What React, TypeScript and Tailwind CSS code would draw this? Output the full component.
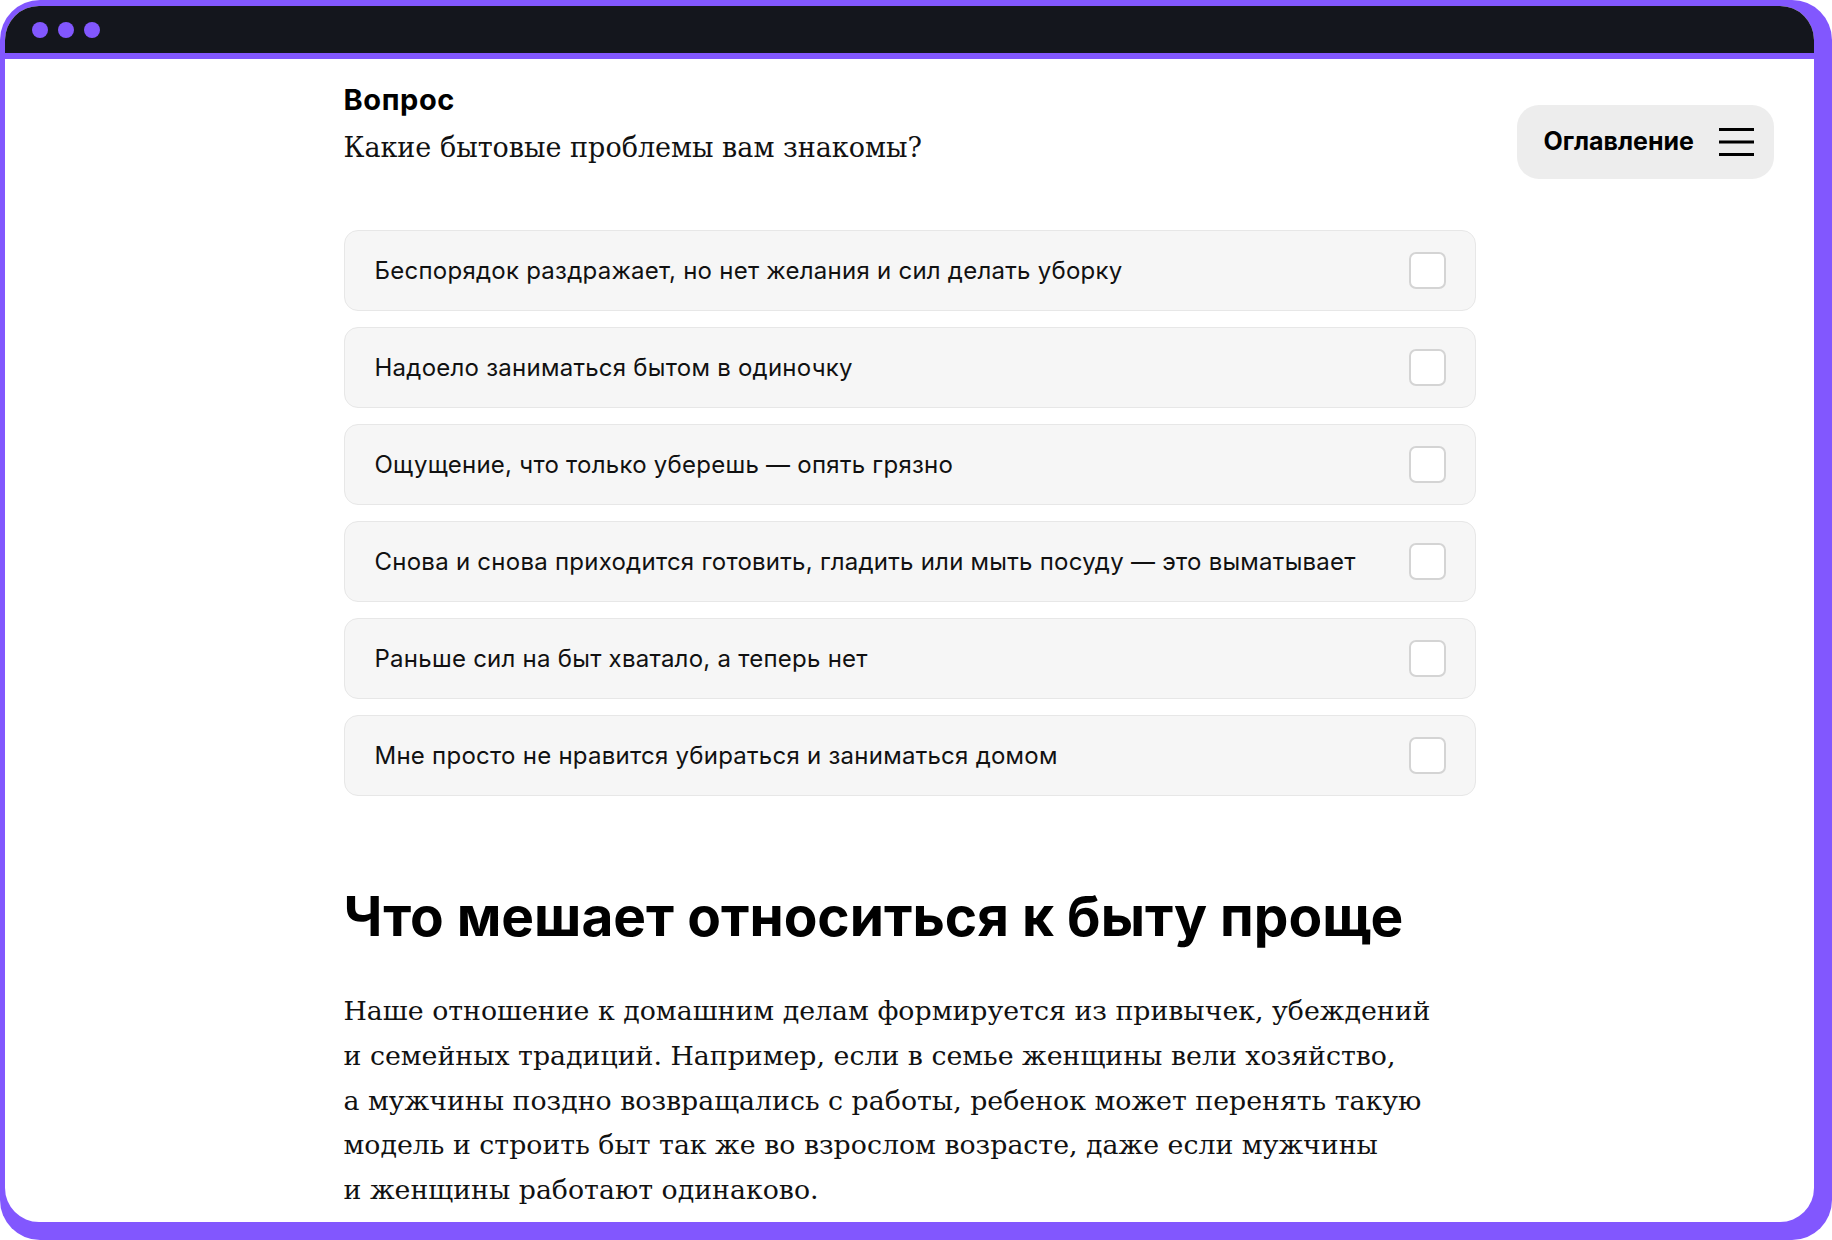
const options = [
  'Беспорядок раздражает, но нет желания и сил делать уборку',
  'Надоело заниматься бытом в одиночку',
  'Ощущение, что только уберешь — опять грязно',
  'Снова и снова приходится готовить, гладить или мыть посуду — это выматывает',
  'Раньше сил на быт хватало, а теперь нет',
  'Мне просто не нравится убираться и заниматься домом',
];

const paragraph = [
  'Наше отношение к домашним делам формируется из привычек, убеждений',
  'и семейных традиций. Например, если в семье женщины вели хозяйство,',
  'а мужчины поздно возвращались с работы, ребенок может перенять такую',
  'модель и строить быт так же во взрослом возрасте, даже если мужчины',
  'и женщины работают одинаково.',
];

const sans = "font-['Inter',sans-serif]";
const serif = "font-['DejaVu_Serif',serif]";

function Option({ label }: { label: string }) {
  return (
    <label className="flex h-[81px] items-center justify-between rounded-[14px] border border-[#e7e7e7] bg-[#f6f6f6] pl-[30px] pr-[29px]">
      <span className={`${sans} text-[24px] leading-[32px] tracking-[0.25px] text-[#111]`}>{label}</span>
      <span className="h-[37px] w-[37px] rounded-[7px] border-2 border-[#d4d4d4] bg-white" />
    </label>
  );
}

export default function App() {
  return (
    <div className="h-[1240px] w-[1832px] rounded-[40px] bg-[#8257fe] pb-[18px] pl-[5px] pr-[18px] pt-[6px]">
      <div className="flex h-full flex-col overflow-hidden rounded-[34px] bg-white">
        <div className="flex h-[53px] shrink-0 items-center gap-[10px] border-b-[6px] border-[#8257fe] bg-[#14161d] pl-[27px]">
          <span className="h-[16px] w-[16px] rounded-full bg-[#8257fe]" />
          <span className="h-[16px] w-[16px] rounded-full bg-[#8257fe]" />
          <span className="h-[16px] w-[16px] rounded-full bg-[#8257fe]" />
        </div>

        <div className="grid grid-cols-[1fr_1132px_1fr]">
          <div />
          <main className="pt-[24px]">
            <h3 className={`${sans} text-[29px] font-bold leading-[34px] tracking-[0.6px] text-black`}>Вопрос</h3>
            <p className={`${serif} mt-[13px] text-[27px] leading-[36px] text-[#111]`}>
              Какие бытовые проблемы вам знакомы?
            </p>

            <div className="mt-[64px] flex flex-col gap-[16px]">
              {options.map((o) => (
                <Option key={o} label={o} />
              ))}
            </div>

            <h2 className={`${sans} mt-[87px] text-[55px] font-bold leading-[66px] text-black`}>
              Что мешает относиться к быту проще
            </h2>
            <p className={`${serif} mt-[40px] text-[26.8px] leading-[44.8px] text-[#111]`}>
              {paragraph.map((line, i) => (
                <span key={i}>
                  {line}
                  {i < paragraph.length - 1 && <br />}
                </span>
              ))}
            </p>
          </main>

          <div className="flex justify-end pr-[40px] pt-[46px]">
            <button className="flex h-[74px] items-center gap-[25px] self-start rounded-[22px] bg-[#ededed] pl-[26px] pr-[20px]">
              <span className={`${sans} text-[25px] font-bold text-black`}>Оглавление</span>
              <svg width="35" height="28" viewBox="0 0 35 28" fill="none">
                <path d="M0 1.5H35M0 14H35M0 26.5H35" stroke="#000" strokeWidth="3" />
              </svg>
            </button>
          </div>
        </div>
      </div>
    </div>
  );
}
